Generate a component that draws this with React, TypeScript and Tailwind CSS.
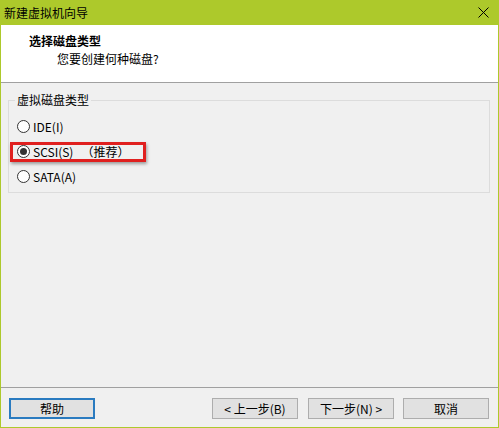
import React from "react";

const font = { fontFamily: '"Noto Sans CJK SC", "Noto Sans", sans-serif' };

function Radio({ checked, label, marked }: { checked?: boolean; label: React.ReactNode; marked?: boolean }) {
  return (
    <div className="relative h-[25px] flex items-center pl-[8px]">
      <div className="w-[13px] h-[13px] rounded-full border border-[#333333] bg-white flex items-center justify-center">
        {checked && <div className="w-[7px] h-[7px] rounded-full bg-[#333333]" />}
      </div>
      <span className="ml-[3px] text-[12px] leading-[16px] text-black">{label}</span>
      {marked && (
        <div className="absolute left-[1px] top-[3px] w-[136px] h-[20px] border-[3px] border-[#e0201f] shadow-[1px_2px_3px_rgba(0,0,0,0.35)]" />
      )}
    </div>
  );
}

function Btn({ children, focused }: { children: React.ReactNode; focused?: boolean }) {
  return (
    <div
      className={
        "w-[86px] h-[21px] bg-[#e1e1e1] flex items-center justify-center text-[12px] leading-[16px] text-black " +
        (focused ? "border-2 border-[#2a7bc0]" : "border border-[#adadad]")
      }
    >
      {children}
    </div>
  );
}

export default function App() {
  return (
    <div className="w-[499px] h-[428px] bg-[#adc92b] flex flex-col px-px pb-px" style={font}>
      <div className="h-[25px] flex items-center justify-between pl-[3px] pr-[9px]">
        <span className="text-[12px] leading-[16px] text-black">新建虚拟机向导</span>
        <svg width="11" height="11" viewBox="0 0 11 11">
          <path d="M0.5 0.5 L10.5 10.5 M10.5 0.5 L0.5 10.5" stroke="#000" strokeWidth="1" />
        </svg>
      </div>
      <div className="flex-1 flex flex-col bg-[#f0f0f0]">
        <div className="h-[57px] bg-white pl-[28px] pt-[8px] flex flex-col gap-[2px]">
          <span className="text-[12px] leading-[16px] font-bold text-black">选择磁盘类型</span>
          <span className="text-[12px] leading-[16px] text-black pl-[28px]">您要创建何种磁盘?</span>
        </div>
        <div className="h-px bg-[#a0a0a0]" />
        <div className="flex-1 pl-[7px] pt-[9px]">
          <fieldset className="w-[482px] h-[101px] border border-[#dcdcdc] m-0 p-0">
            <legend className="ml-[6px] px-[2px] text-[12px] leading-[16px] text-black">虚拟磁盘类型</legend>
            <div className="pt-[6px]">
              <Radio label="IDE(I)" />
              <Radio
                checked
                marked
                label={
                  <span>
                    SCSI(S)<span className="ml-[8px]">（推荐）</span>
                  </span>
                }
              />
              <Radio label="SATA(A)" />
            </div>
          </fieldset>
        </div>
        <div className="h-px bg-[#a0a0a0]" />
        <div className="h-[39px] flex items-start pt-[10px] pl-[8px] pr-[9px]">
          <Btn focused>帮助</Btn>
          <div className="ml-auto flex gap-[9px]">
            <div className="mr-px">
              <Btn>&lt; 上一步(B)</Btn>
            </div>
            <Btn>下一步(N) &gt;</Btn>
            <Btn>取消</Btn>
          </div>
        </div>
      </div>
    </div>
  );
}
